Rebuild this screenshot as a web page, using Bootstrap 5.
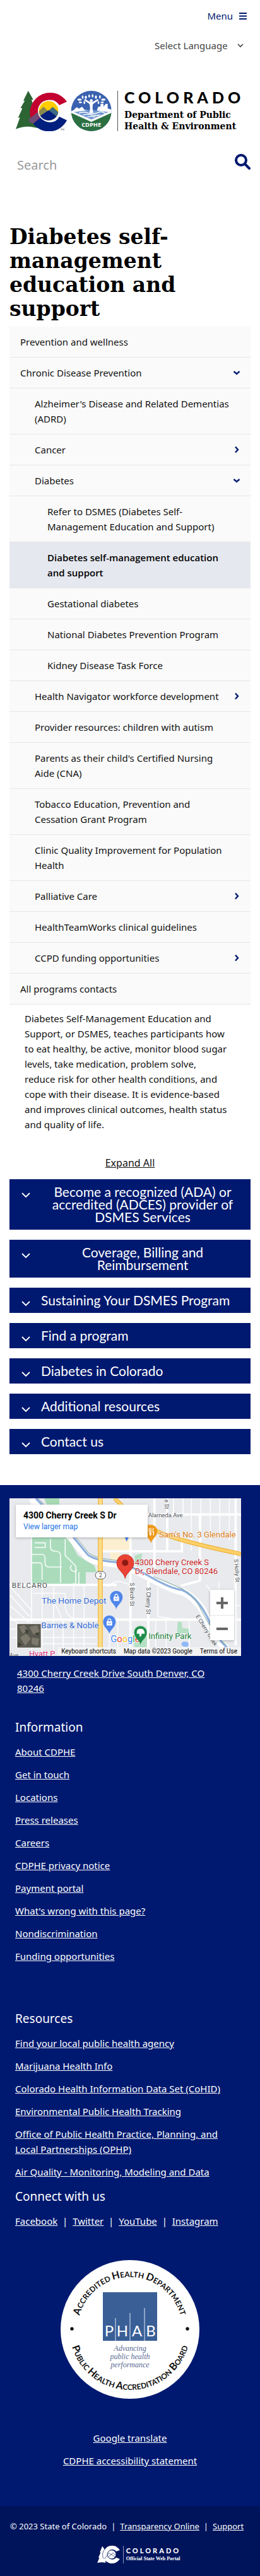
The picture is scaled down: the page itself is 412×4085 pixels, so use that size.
<!DOCTYPE html>
<html lang="en">
<head>
<meta charset="utf-8">
<meta name="viewport" content="width=device-width, initial-scale=1">
<title>Diabetes self-management education and support</title>
<link href="https://cdn.jsdelivr.net/npm/bootstrap@5.3.0/dist/css/bootstrap.min.css" rel="stylesheet">
<style>
  :root { --navy: #001970; --navy-deep: #00145c; }
  body { font-family: "Noto Sans", sans-serif; font-size: 15px; line-height: 24px; color: #111; background: #fff; }
  .page-pad { padding-left: 15px; padding-right: 15px; }

  .menu-row { height: 50px; padding-right: 21px; }
  .menu-btn { color: var(--navy); border: 0; background: none; padding: 0; gap: 10px; }
  .lang-row { height: 44px; padding-right: 17px; }
  .lang-select { appearance: none; border: 0; color: #444; padding: 0 34px 0 0; font-size: 15px; line-height: 24px;
    background: url("data:image/svg+xml,%3Csvg xmlns='http://www.w3.org/2000/svg' viewBox='0 0 10 7'%3E%3Cpath d='M1 1l4 4 4-4' fill='none' stroke='%23444' stroke-width='1.6'/%3E%3C/svg%3E") no-repeat right 9px center / 10px 7px; }

  .brand-row { margin-top: 50px; padding-left: 25px; height: 64px; color: #000; text-decoration: none; }
  .brand-text { border-left: 1px solid #555; margin-left: 9px; padding-left: 10px; height: 64px; white-space: nowrap; }
  .brand-state { font: 900 25px/20px Lato, sans-serif; letter-spacing: 6px; }
  .brand-dept { font: bold 14px/18px "DejaVu Serif", serif; margin-top: 9px; }

  .search-row { margin-top: 30px; height: 48px; padding: 0 15px 0 27px; }
  .search-row input { border: 0; padding: 0; min-width: 0; font-size: 20px; outline-offset: 2px; color: #333; }
  .search-row input::placeholder { color: #999; }
  .search-row button { border: 0; background: none; padding: 0 0 12px; }

  h1.page-title { font: bold 33px/38px "DejaVu Serif", serif; color: #000; margin: 71px 0 9px; max-width: 320px; }

  .side-nav a { display: flex; align-items: center; padding: 12px 24px 12px 17px; color: #111; text-decoration: none;
    background: #fafafa; border-bottom: 1px solid #e6e6e6; }
  .side-nav a.lvl-2 { padding-left: 40px; }
  .side-nav a.lvl-3 { padding-left: 60px; }
  .side-nav a.has-arrow { padding-right: 16px; justify-content: space-between; }
  .side-nav a.active { background: #e5e8ef; font-family: "Open Sans", sans-serif; font-weight: 600; color: #000; }

  .intro { margin: 10px 24px 37px 24px; }
  .expand-btn { border: 0; background: none; padding: 0; font-size: 16px; line-height: 24px; text-decoration: underline; color: #111; }
  .fold-list { margin-top: 14px; gap: 16px; }
  .fold-btn { width: 100%; border: 0; background: var(--navy); color: #fff; font: 21px/20px Lato, sans-serif; padding: 10px 10px 10px 19px; gap: 17px; }
  .fold-btn svg { margin-top: 11px; flex: none; }

  footer.site-foot { margin-top: 49px; background: var(--navy); color: #fff; padding-top: 21px; }
  footer.site-foot a { color: #fff; text-decoration: underline; }
  .map-box { margin: 0 30px 0 15px; height: 250px; background: #e8eaed; position: relative; overflow: hidden; font-family: Roboto, sans-serif; }
  .map-art { width: 100%; height: 100%; display: block; }
  .map-card { position: absolute; left: 10px; top: 10px; width: 209px; height: 52px; background: #fff; padding: 8px 12px; box-shadow: 0 1px 4px #0004; line-height: 19px; color: #000; font-size: 14px; }
  footer.site-foot .map-card a { font-size: 12px; line-height: 16px; color: #1a73e8; text-decoration: none; display: block; }
  .map-zoom { position: absolute; right: 11px; bottom: 25px; width: 38px; background: #fff; box-shadow: 0 1px 4px #0004; }
  .map-zoom button { border: 0; background: none; height: 40px; padding: 0; }
  .map-zoom button + button { border-top: 1px solid #e6e6e6; }
  .map-terms { position: absolute; right: 0; bottom: 0; height: 14px; padding: 0 6px; background: #f5f5f5dd; font-size: 10px; line-height: 14px; gap: 12px; white-space: nowrap; color: #000; }
  .map-terms button { border: 0; background: none; padding: 0; color: #000; line-height: 14px; }
  footer.site-foot .map-terms a { color: #000; text-decoration: none; }
  .address { margin: 15px 52px 35px 27px; }
  .foot-col { padding: 0 30px 0 24px; }
  .foot-col h2 { font-size: 19px; line-height: 30px; font-weight: 400; margin: 0; }
  .foot-links { list-style: none; margin: 12px 0; padding: 0; display: grid; gap: 12px; }
  .foot-col h2.second { margin-top: 72px; }
  .social { margin: 12px 0 0; }
  .seal { display: block; width: 220px; height: 220px; margin: 50px auto; }
  .foot-bottom { background: var(--navy-deep); margin-top: 60px; padding: 20px 16px; }
  .legal { font-size: 13px; gap: 7px; white-space: nowrap; }
  .portal { margin-top: 19px; height: 28px; gap: 5px; padding-left: 28px; }
  .portal-text { border-left: 1px solid #8c96bf; padding-left: 4px; height: 28px; white-space: nowrap; text-align: left; }
  .portal-state { font: 900 11px/14px Lato, sans-serif; letter-spacing: 3px; margin-top: 1px; }
  .portal-sub { font: bold 8px/12px "Liberation Serif", serif; }
</style>
</head>
<body>
<svg class="d-none" aria-hidden="true">
  <symbol id="arrow-down" viewBox="0 0 12 12"><path d="M1.5 4l4.5 4 4.5-4" fill="none" stroke="#001970" stroke-width="2.4"/></symbol>
  <symbol id="arrow-right" viewBox="0 0 12 12"><path d="M4 1.5l4 4.5-4 4.5" fill="none" stroke="#001970" stroke-width="2.4"/></symbol>
  <symbol id="fold-arrow" viewBox="0 0 14 9"><path d="M1 1l6 6 6-6" fill="none" stroke="#fff" stroke-width="1.8"/></symbol>
</svg>

<header>
  <div class="menu-row d-flex align-items-center justify-content-end">
    <button class="menu-btn d-flex align-items-center" type="button">Menu
      <svg width="12" height="11" viewBox="0 0 12 11" aria-hidden="true"><path d="M0 1h12M0 5.5h12M0 10h12" stroke="#001970" stroke-width="2"/></svg>
    </button>
  </div>
  <div class="lang-row d-flex align-items-center justify-content-end">
    <select class="lang-select" aria-label="Select Language"><option>Select Language</option></select>
  </div>
  <a class="brand-row d-flex" href="#">
    <svg width="152" height="64" viewBox="75 432 456 192" aria-hidden="true">
      <path d="M134 432l24 42-8 1 8 24 20 110-20-4q-40-8-83 9l20-55-9 2 20-45-8-3 20-34-7 0z" fill="#2c6434"/>
      <path d="M282 500L318 484A95 95 0 1 0 158 589L192 557A50 50 0 1 1 282 500z" fill="#c3002f"/>
      <path d="M158 589L194 556A50 50 0 0 0 282 555L318 572A95 95 0 0 1 158 589z" fill="#001f7e"/>
      <path d="M134 570L178 534 190 556 158 589Q143 584 134 570z" fill="#6f4a75"/>
      <circle cx="231" cy="527" r="51" fill="#fff"/>
      <clipPath id="sun"><circle cx="231" cy="527" r="46"/></clipPath>
      <g clip-path="url(#sun)">
        <path d="M180 475h102v105H180z" fill="#ffcd00"/>
        <path d="M180 534l27-27 21 22 20-20 40 36v20H180z" fill="#8a8a4d"/>
        <path d="M231 529l21-20 36 34v20z" fill="#3f6b83"/>
        <path d="M178 560l53-36 55 42v20H178z" fill="#001f7e"/>
      </g>
      <path d="M288 613h7m-3 0v7m6 0v-7l3 4 3-4v7" fill="none" stroke="#333" stroke-width="1.5"/>
      <clipPath id="cd"><circle cx="434" cy="528" r="96"/></clipPath>
      <g clip-path="url(#cd)">
        <path d="M338 432h192v192H338z" fill="#3a62b0"/>
        <path d="M338 531l14-9 12-12 12 7 14-9 12 14 20 3 38 2 6-18 12-3v-12h14v14l10-14h10v22l30 10v30H338z" fill="#fff"/>
        <path d="M338 534l96 44 96-44v96H338z" fill="#2c7042"/>
        <path d="M340 535l94-13 94 13-94 40z" fill="#6e96cf"/>
        <path d="M352 535l82 35 82-35M375 538q22-8 45 0t45-2 35 4M395 547q20-6 40 0t40-1M415 556q20-4 38 0" fill="none" stroke="#fff" stroke-width="4"/>
        <path d="M338 533l96 43 96-43" fill="none" stroke="#fff" stroke-width="7"/>
        <path d="M425 538q6-24 0-44l-26-17 5-6 24 14h12l24-14 5 6-27 18q-5 20 2 43z" fill="#fff"/>
        <circle cx="434" cy="479" r="7" fill="#fff"/>
        <g fill="#fff"><ellipse cx="378" cy="474" rx="10" ry="5"/><ellipse cx="393" cy="462" rx="4" ry="8"/><ellipse cx="408" cy="463" rx="5" ry="8"/><ellipse cx="424" cy="457" rx="4" ry="8"/><ellipse cx="440" cy="456" rx="4" ry="8"/><ellipse cx="456" cy="462" rx="5" ry="8"/><ellipse cx="475" cy="461" rx="4" ry="8"/><ellipse cx="491" cy="474" rx="10" ry="5"/><ellipse cx="382" cy="487" rx="8" ry="4"/><ellipse cx="401" cy="488" rx="4" ry="7"/><ellipse cx="468" cy="488" rx="4" ry="7"/><ellipse cx="486" cy="487" rx="8" ry="4"/></g>
        <text x="434" y="602" text-anchor="middle" font-family="Open Sans, sans-serif" font-weight="700" font-size="28" fill="#fff">CDPHE</text>
      </g>
    </svg>
    <div class="brand-text">
      <div class="brand-state">COLORADO</div>
      <div class="brand-dept">Department of Public<br>Health &amp; Environment</div>
    </div>
  </a>
  <form class="search-row d-flex align-items-center">
    <input class="flex-grow-1" type="search" placeholder="Search" aria-label="Search">
    <button type="button" aria-label="Submit search"><svg width="25" height="25" viewBox="0 0 25 25" aria-hidden="true"><circle cx="10" cy="10" r="8" fill="none" stroke="#001970" stroke-width="4"/><path d="M16 16l7 7" stroke="#001970" stroke-width="4" stroke-linecap="round"/></svg></button>
  </form>
</header>

<main class="page-pad">
  <h1 class="page-title">Diabetes self-management education and support</h1>
  <nav class="side-nav" aria-label="Programs">
    <a href="#">Prevention and wellness</a>
    <a href="#" class="has-arrow">Chronic Disease Prevention <svg width="12" height="12"><use href="#arrow-down"/></svg></a>
    <a href="#" class="lvl-2">Alzheimer's Disease and Related Dementias (ADRD)</a>
    <a href="#" class="lvl-2 has-arrow">Cancer <svg width="12" height="12"><use href="#arrow-right"/></svg></a>
    <a href="#" class="lvl-2 has-arrow">Diabetes <svg width="12" height="12"><use href="#arrow-down"/></svg></a>
    <a href="#" class="lvl-3">Refer to DSMES (Diabetes Self-Management Education and Support)</a>
    <a href="#" class="lvl-3 active" aria-current="page">Diabetes self-management education and support</a>
    <a href="#" class="lvl-3">Gestational diabetes</a>
    <a href="#" class="lvl-3">National Diabetes Prevention Program</a>
    <a href="#" class="lvl-3">Kidney Disease Task Force</a>
    <a href="#" class="lvl-2 has-arrow">Health Navigator workforce development <svg width="12" height="12"><use href="#arrow-right"/></svg></a>
    <a href="#" class="lvl-2">Provider resources: children with autism</a>
    <a href="#" class="lvl-2">Parents as their child's Certified Nursing Aide&nbsp;(CNA)</a>
    <a href="#" class="lvl-2">Tobacco Education, Prevention and Cessation&nbsp;Grant Program</a>
    <a href="#" class="lvl-2">Clinic Quality Improvement for Population Health</a>
    <a href="#" class="lvl-2 has-arrow">Palliative Care <svg width="12" height="12"><use href="#arrow-right"/></svg></a>
    <a href="#" class="lvl-2">HealthTeamWorks clinical guidelines</a>
    <a href="#" class="lvl-2 has-arrow">CCPD funding opportunities <svg width="12" height="12"><use href="#arrow-right"/></svg></a>
    <a href="#">All programs contacts</a>
  </nav>

  <p class="intro">Diabetes Self-Management Education and Support, or DSMES, teaches participants how to&nbsp;eat healthy, be active, monitor blood sugar levels, take medication, problem solve, reduce&nbsp;risk for other health conditions, and cope&nbsp;with their disease. It is evidence-based and&nbsp;improves clinical outcomes, health status and quality of life.</p>
  <div class="d-flex justify-content-center"><button class="expand-btn" type="button">Expand All</button></div>
  <div class="fold-list d-flex flex-column">
    <button class="fold-btn d-flex align-items-start" type="button"><svg width="14" height="9"><use href="#fold-arrow"/></svg><span>Become a recognized (ADA) or accredited (ADCES) provider of DSMES Services</span></button>
    <button class="fold-btn d-flex align-items-start" type="button"><svg width="14" height="9"><use href="#fold-arrow"/></svg><span>Coverage, Billing and Reimbursement</span></button>
    <button class="fold-btn d-flex align-items-start" type="button"><svg width="14" height="9"><use href="#fold-arrow"/></svg><span>Sustaining Your DSMES Program</span></button>
    <button class="fold-btn d-flex align-items-start" type="button"><svg width="14" height="9"><use href="#fold-arrow"/></svg><span>Find a program</span></button>
    <button class="fold-btn d-flex align-items-start" type="button"><svg width="14" height="9"><use href="#fold-arrow"/></svg><span>Diabetes in Colorado</span></button>
    <button class="fold-btn d-flex align-items-start" type="button"><svg width="14" height="9"><use href="#fold-arrow"/></svg><span>Additional resources</span></button>
    <button class="fold-btn d-flex align-items-start" type="button"><svg width="14" height="9"><use href="#fold-arrow"/></svg><span>Contact us</span></button>
  </div>
</main>

<footer class="site-foot">
  <div class="map-box">
    <svg class="map-art" viewBox="45 78 1101 750" preserveAspectRatio="xMidYMid slice" aria-label="Map of 4300 Cherry Creek S Dr">
      <path d="M45 78h1101v750H45z" fill="#e8eaed"/>
      <path d="M210 78h72v30h-60z" fill="#a8dab5"/>
      <path d="M150 260h170l50 90 80 50 8 30h-50v56H150z" fill="#aadcbc"/>
      <path d="M485 260h140v65H485zM520 335h50v50h-40z" fill="#fcefd0"/>
      <path d="M638 700q28-35 60 0v86h-60zM845 665h18l4 30 35 5v20h-60zM640 350l36-10-8 60-28-20z" fill="#b5e0c3"/>
      <path d="M866 762q18-6 30 4v18h-24l-10-10z" fill="#90b8f8"/>
      <g fill="none" stroke="#fff" stroke-width="5" opacity=".9">
        <path d="M150 80v720M200 500v328M255 500v328M300 660v168M350 480v348M400 490v338"/>
        <path d="M165 290h50v22h-50M150 345h50q14 0 14 20v20q0 20 20 20h60M240 270v40q0 20 24 20t24 20v130M310 270v80l50 50v90M375 430v60M150 385h40q10 0 10 20v60"/>
        <path d="M50 500l100 110M50 540l90 100M50 590l90 80M45 640l60 50M160 530h150v60q0 40 40 60h110M210 560q60 0 80 90M60 740h400M200 770h260M45 700h200M520 690v138M560 660v168M740 660v168M790 660v168M900 660v168M1040 480v200M510 500q40-40 80-20l60 20M750 500v140l60 10M980 490l60 80 100 20"/>
        <path d="M825 78v80M870 78v80M910 78v250M955 78v220M1000 78v200M1045 78v180M1090 78v200"/>
        <path d="M340 395q-12 20 4 28t22-6"/>
      </g>
      <g fill="none" stroke="#fff" stroke-width="11">
        <path d="M45 490h510M45 655h1101M620 260v568M705 430v398M700 155h446M734 78v330M795 78v250M485 330h380v-70M950 160v310l-90 24M1120 78v700"/>
      </g>
      <path d="M150 78l190 190 76 90q30 24 120 30 70 10 180 70t150 64q90 40 130 160 20 60 80 110" fill="none" stroke="#fff" stroke-width="34"/>
      <path d="M170 78l175 180 70 86q34 30 140 38 60 12 160 70t150 62q80 36 130 150 26 70 84 124" fill="none" stroke="#8fb0dd" stroke-width="10"/>
      <path d="M180 78l172 174 70 86q34 28 140 36M730 450l136 58q60 30 100 120 40 80 110 150" fill="none" stroke="#84a99a" stroke-width="3"/>
      <path d="M477 78v750" stroke="#f0b43c" stroke-width="23"/><path d="M477 78v750" stroke="#fddc86" stroke-width="16"/>
      <path d="M545 78l60 60q80 80 200 120t341 85" fill="none" stroke="#f0b43c" stroke-width="20"/>
      <path d="M545 78l60 60q80 80 200 120t341 85" fill="none" stroke="#fdd06a" stroke-width="13"/>
      <rect x="454" y="426" width="48" height="36" rx="17" fill="#fff" stroke="#555" stroke-width="3"/>
      <g font-family="Roboto, sans-serif" paint-order="stroke" stroke="#fff" stroke-width="3" stroke-linejoin="round">
        <text x="478" y="454" text-anchor="middle" font-size="25" fill="#444" stroke="none">2</text>
        <text x="705" y="168" font-size="28" fill="#4a4e52">Alameda Ave</text>
        <text x="56" y="504" font-size="35" fill="#4a4e52" letter-spacing="3">BELCARO</text>
        <text x="756" y="263" font-size="39" fill="#d97b16">Sam's No. 3 Glendale</text>
        <text x="641" y="395" font-size="39" fill="#c5221f">4300 Cherry Creek S</text>
        <text x="641" y="438" font-size="39" fill="#c5221f">Dr, Glendale, CO 80246</text>
        <text x="198" y="578" font-size="41" fill="#2f66d4">The Home Depot</text>
        <text x="196" y="696" font-size="40" fill="#2f66d4">Barnes &amp; Noble</text>
        <text x="706" y="747" font-size="39" fill="#188038">Infinity Park</text>
        <text x="138" y="830" font-size="38" fill="#d5307a">Hyatt P</text>
        <text x="45" y="834" font-size="26" fill="#4a4e52">Ave</text>
        <g font-size="26" fill="#4a4e52">
          <text transform="translate(619 480) rotate(90)">S Birch St</text>
          <text transform="translate(696 502) rotate(90)">S Cherry St</text>
          <text transform="translate(1113 368) rotate(86)">S Holly St</text>
          <text transform="translate(783 84) rotate(90)">e St</text>
          <text transform="translate(930 640) rotate(58)">E Cherry Creek</text>
        </g>
        <text x="526" y="762" font-size="44" stroke-width="6"><tspan fill="#4285f4">G</tspan><tspan fill="#ea4335">o</tspan><tspan fill="#fbbc05">o</tspan><tspan fill="#4285f4">g</tspan><tspan fill="#34a853">l</tspan><tspan fill="#ea4335">e</tspan></text>
      </g>
      <path d="M595 460c-4-30-40-40-40-74a40 40 0 0 1 81 0c0 34-37 44-41 74z" fill="#ea4335" stroke="#b31412" stroke-width="2"/><circle cx="595" cy="385" r="15" fill="#8c1a11"/>
      <path d="M718 292c-3-20-30-32-30-58a30 30 0 0 1 60 0c0 26-27 38-30 58z" fill="#ee9a1c"/><path d="M709 220v12q4 6 4 22M717 220v34M730 220q-6 10-3 18h3v16" stroke="#fff" stroke-width="4" fill="none"/>
      <path d="M602 284l-9-20h18z" fill="#4a7ff0"/>
      <g id="shop"><path d="M553 606c-3-20-30-32-30-58a30 30 0 0 1 60 0c0 26-27 38-30 58z" fill="#4f86ec"/><path d="M540 546h26v20h-26z" fill="#fff"/><path d="M546 546v-6q7-12 14 0v6" fill="none" stroke="#fff" stroke-width="4"/><path d="M546 554q7 8 14 0" fill="none" stroke="#4f86ec" stroke-width="3"/></g>
      <use href="#shop" x="-33" y="117"/>
      <path d="M668 774c-3-20-30-32-30-58a30 30 0 0 1 60 0c0 26-27 38-30 58z" fill="#1e8e4a"/><path d="M650 722q-2-24 18-24t20 24h-14l-4 14h-6l-2-14z" fill="#fff"/>
      <path d="M78 672h118v118H78z" fill="#fff"/><path d="M82 676h112v112H82z" fill="#5b5a50"/>
      <path d="M90 690l24-10 16 20-20 24zM140 690l36-8 12 30-30 14zM96 740l30-20 20 26-26 34zM152 740l34 6-6 34-30-10z" fill="#7d796c"/><path d="M118 700l20 8-10 20zM84 760l20 14-18 12zM166 720l18-4v20z" fill="#3f4238"/>
    </svg>
    <div class="map-card"><span class="fw-bold">4300 Cherry Creek S Dr</span><a href="#">View larger map</a></div>
    <div class="map-zoom d-flex flex-column">
      <button type="button" aria-label="Zoom in"><svg width="18" height="18" viewBox="0 0 18 18"><path d="M0 9h18M9 0v18" stroke="#666" stroke-width="4"/></svg></button>
      <button type="button" aria-label="Zoom out"><svg width="18" height="18" viewBox="0 0 18 18"><path d="M0 9h18" stroke="#666" stroke-width="4"/></svg></button>
    </div>
    <div class="map-terms d-flex"><button type="button">Keyboard shortcuts</button><span>Map data ©2023 Google</span><a href="#">Terms of Use</a></div>
  </div>
  <p class="address"><a href="#">4300 Cherry Creek Drive South Denver, CO 80246</a></p>

  <div class="foot-col">
    <h2>Information</h2>
    <ul class="foot-links">
      <li><a href="#">About CDPHE</a></li>
      <li><a href="#">Get in touch</a></li>
      <li><a href="#">Locations</a></li>
      <li><a href="#">Press releases</a></li>
      <li><a href="#">Careers</a></li>
      <li><a href="#">CDPHE privacy notice</a></li>
      <li><a href="#">Payment portal</a></li>
      <li><a href="#">What's wrong with this page?</a></li>
      <li><a href="#">Nondiscrimination</a></li>
      <li><a href="#">Funding opportunities</a></li>
    </ul>
    <h2 class="second">Resources</h2>
    <ul class="foot-links">
      <li><a href="#">Find your local public health agency</a></li>
      <li><a href="#">Marijuana Health Info</a></li>
      <li><a href="#">Colorado Health Information Data Set (CoHID)</a></li>
      <li><a href="#">Environmental Public Health Tracking</a></li>
      <li><a href="#">Office of Public Health Practice, Planning, and Local Partnerships (OPHP)</a></li>
      <li><a href="#">Air Quality - Monitoring, Modeling and Data</a></li>
    </ul>
    <h2>Connect with us</h2>
    <p class="social"><a href="#">Facebook</a>&nbsp; |&nbsp; <a href="#">Twitter</a>&nbsp; |&nbsp; <a href="#">YouTube</a>&nbsp; |&nbsp; <a href="#">Instagram</a></p>
  </div>

  <svg class="seal" viewBox="0 0 220 220" role="img" aria-label="Public Health Accreditation Board seal">
    <circle cx="110" cy="110" r="110" fill="#fff"/>
    <path id="arc-top" d="M27 110a83 83 0 0 1 166 0" fill="none"/>
    <path id="arc-low" d="M14 110a96 96 0 0 0 192 0" fill="none"/>
    <g font-family="Lato, sans-serif" font-weight="700" font-size="12" fill="#111" text-anchor="middle">
      <text><textPath href="#arc-top" startOffset="50%"><tspan font-size="16">A</tspan>CCREDITED <tspan font-size="16">H</tspan>EALTH <tspan font-size="16">D</tspan>EPARTMENT</textPath></text>
      <text><textPath href="#arc-low" startOffset="50%"><tspan font-size="16">P</tspan>UBLIC <tspan font-size="16">H</tspan>EALTH <tspan font-size="16">A</tspan>CCREDITATION <tspan font-size="16">B</tspan>OARD</textPath></text>
    </g>
    <circle cx="18" cy="109" r="2.7" fill="#111"/><circle cx="201" cy="109" r="2.7" fill="#111"/>
    <path d="M67 51h86v77H67z" fill="#3a5f97"/>
    <path d="M87 92v36M110 84v44M133 76v52" stroke="#dfeaf8" stroke-width="1"/>
    <g font-family="Lato, sans-serif" font-size="24" fill="#fff" text-anchor="middle"><text x="77" y="121">P</text><text x="98" y="121">H</text><text x="121" y="121">A</text><text x="143" y="121">B</text></g>
    <g font-family="Liberation Serif, serif" font-style="italic" font-size="12" fill="#5a6a92" text-anchor="middle"><text x="110" y="144">Advancing</text><text x="110" y="157">public health</text><text x="110" y="170">performance</text></g>
  </svg>

  <ul class="foot-links text-center">
    <li><a href="#">Google translate</a></li>
    <li><a href="#">CDPHE accessibility statement</a></li>
  </ul>

  <div class="foot-bottom">
    <div class="legal d-flex"><span>© 2023 State of Colorado</span><span>|</span><a href="#">Transparency Online</a><span>|</span><a href="#">Support</a></div>
    <div class="portal d-flex justify-content-center">
      <svg width="36" height="28" viewBox="458 1430 108 85" aria-hidden="true">
        <path d="M482 1432l14 20 2 60q-20-5-40 1l10-26-5 0 11-24-4-1z" fill="#fff"/>
        <path d="M549 1457L566 1451A43 43 0 1 0 566 1494L549 1487A24 24 0 1 1 549 1457z" fill="#fff"/>
        <path d="M487 1492A43 43 0 0 1 496 1444" fill="none" stroke="#00145c" stroke-width="2"/>
        <circle cx="527" cy="1472" r="21" fill="#fff" stroke="#00145c" stroke-width="2"/>
        <path d="M492 1494l22-30 10 9 9-9 13 12M508 1485l18-13 19 14" fill="none" stroke="#00145c" stroke-width="2"/>
      </svg>
      <div class="portal-text">
        <div class="portal-state">COLORADO</div>
        <div class="portal-sub">Official State Web Portal</div>
      </div>
    </div>
  </div>
</footer>
<script src="https://cdn.jsdelivr.net/npm/bootstrap@5.3.0/dist/js/bootstrap.bundle.min.js"></script>
</body>
</html>
